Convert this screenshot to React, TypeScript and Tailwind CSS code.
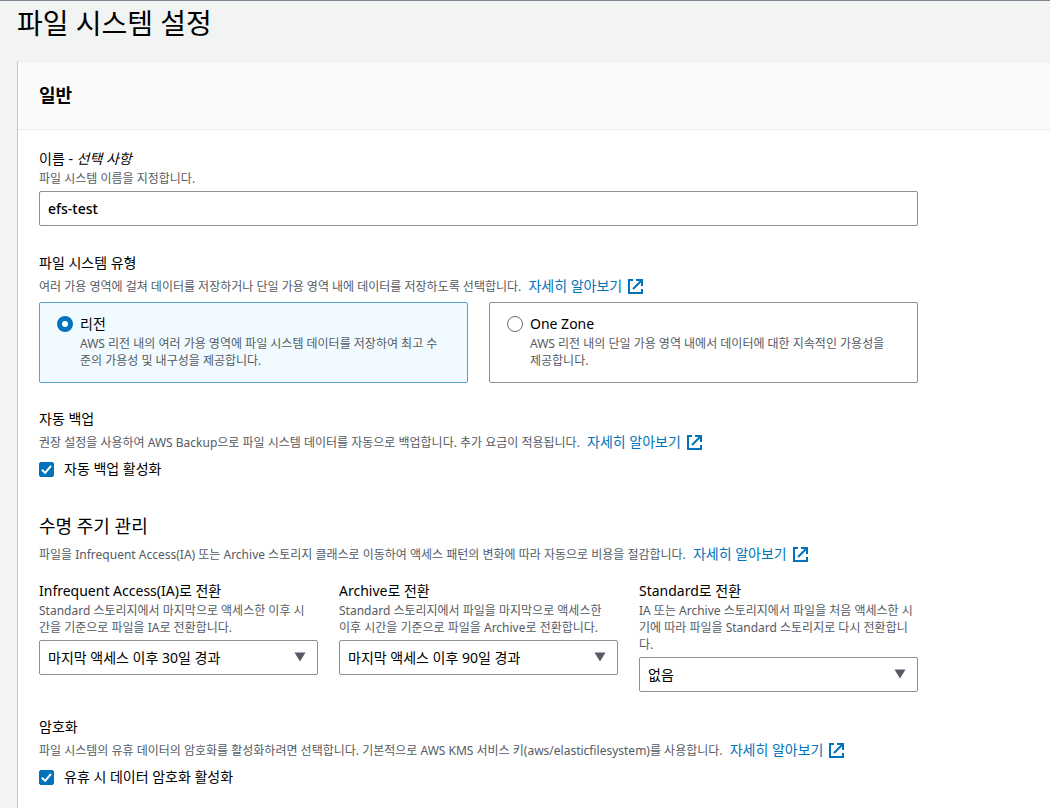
import { useId, useState } from "react";
import type { ReactNode } from "react";

const lifecyclePolicies = [
  {
    label: "Infrequent Access(IA)로 전환",
    description: "Standard 스토리지에서 마지막으로 액세스한 이후 시간을 기준으로 파일을 IA로 전환합니다.",
    options: ["마지막 액세스 이후 30일 경과", "없음"]
  },
  {
    label: "Archive로 전환",
    description: "Standard 스토리지에서 파일을 마지막으로 액세스한 이후 시간을 기준으로 파일을 Archive로 전환합니다.",
    options: ["마지막 액세스 이후 90일 경과", "없음"]
  },
  {
    label: "Standard로 전환",
    description: "IA 또는 Archive 스토리지에서 파일을 처음 액세스한 시기에 따라 파일을 Standard 스토리지로 다시 전환합니다.",
    options: ["없음", "처음 액세스 시"]
  }
];

const fileSystemTypes = [
  {
    value: "regional",
    label: "리전",
    description: "AWS 리전 내의 여러 가용 영역에 파일 시스템 데이터를 저장하여 최고 수준의 가용성 및 내구성을 제공합니다."
  },
  {
    value: "one-zone",
    label: "One Zone",
    description: "AWS 리전 내의 단일 가용 영역 내에서 데이터에 대한 지속적인 가용성을 제공합니다."
  }
];

function LearnMore() {
  return (
    <a href="#" className="ml-1 text-sm leading-4 text-[#0073bb] hover:underline">
      자세히 알아보기
      <svg
        viewBox="0 0 15 15"
        className="ml-1.5 inline-block size-[15px] align-[-3px]"
        fill="none"
        stroke="currentColor"
        strokeWidth="2"
        aria-hidden="true"
      >
        <path d="M5 1H1v13h13v-4" />
        <path d="M8 1h6v6M13.5 1.5L5 10" />
      </svg>
    </a>
  );
}

function Description({ children }: { children: ReactNode }) {
  return (
    <p className="pt-0.5 text-xs leading-[22px] text-[#545b64]">
      {children} <LearnMore />
    </p>
  );
}

function Checkbox({ label }: { label: string }) {
  const [checked, setChecked] = useState(true);

  return (
    <label className="mt-1 flex items-center gap-[10px] leading-[22px]">
      <span className="relative size-[15px]">
        <input
          type="checkbox"
          checked={checked}
          onChange={(e) => setChecked(e.target.checked)}
          className="block size-[15px] appearance-none rounded-xs border border-[#687078] checked:border-[#0073bb] checked:bg-[#0073bb]"
        />
        {checked && (
          <svg
            viewBox="0 0 15 15"
            className="pointer-events-none absolute inset-0 size-[15px]"
            fill="none"
            stroke="white"
            strokeWidth="2"
            aria-hidden="true"
          >
            <path d="M2.8 7.8l3.4 3L12 3.8" />
          </svg>
        )}
      </span>
      {label}
    </label>
  );
}

function PolicySelect({ label, description, options }: (typeof lifecyclePolicies)[number]) {
  const id = useId();

  return (
    <div>
      <label htmlFor={id} className="block leading-[22px]">
        {label}
      </label>
      <p className="pr-1 text-xs leading-[17px] text-[#545b64]">{description}</p>
      <div className="relative mt-1">
        <select
          id={id}
          className="block h-[35px] w-full appearance-none rounded-xs border border-[#879196] bg-white px-2 pr-8"
        >
          {options.map((option) => (
            <option key={option}>{option}</option>
          ))}
        </select>
        <svg
          viewBox="0 0 12 10"
          className="pointer-events-none absolute top-3 right-3 h-[10px] w-3 text-[#545b64]"
          fill="currentColor"
          aria-hidden="true"
        >
          <path d="M0.5 0.5h11L6 9.5z" />
        </svg>
      </div>
    </div>
  );
}

export default function App() {
  const [name, setName] = useState("efs-test");
  const [type, setType] = useState("regional");

  return (
    <main className="flex min-h-screen flex-col border-t border-[#7d8490] bg-[#f2f3f3] pl-[17px] font-['Noto_Sans','Noto_Sans_CJK_KR',sans-serif] text-sm text-black">
      <h1 className="pt-0.5 pb-4.5 text-[28px] leading-10">파일 시스템 설정</h1>

      <section className="flex-1 border-t border-l border-t-[#eaeded] border-l-[#c4cbcb] bg-white">
        <header className="border-b border-[#eaeded] bg-[#fafafa] px-[21px] py-5">
          <h2 className="text-lg leading-[27px] font-bold">일반</h2>
        </header>

        <div className="max-w-[921px] px-[21px] pt-[18px] pb-4">
          {/* Name */}
          <label htmlFor="fs-name" className="block leading-[22px]">
            이름 - <em>선택 사항</em>
          </label>
          <p className="text-xs leading-[17px] text-[#545b64]">파일 시스템 이름을 지정합니다.</p>
          <input
            id="fs-name"
            type="text"
            value={name}
            onChange={(e) => setName(e.target.value)}
            className="mt-1 block h-[35px] w-full rounded-xs border border-[#879196] bg-white px-2 font-medium"
          />

          {/* File system type */}
          <fieldset className="mt-[26px]">
            <legend className="leading-[22px]">파일 시스템 유형</legend>
            <Description>
              여러 가용 영역에 걸쳐 데이터를 저장하거나 단일 가용 영역 내에 데이터를 저장하도록 선택합니다.
            </Description>
            <div className="mt-1 grid grid-cols-2 gap-[21px]">
              {fileSystemTypes.map((item) => (
                <label
                  key={item.value}
                  className="flex gap-[7px] rounded-xs border border-[#879196] px-[17px] pt-[10px] pb-[13px] has-checked:border-[#5a9fd4] has-checked:bg-[#f1faff]"
                >
                  <input
                    type="radio"
                    name="fs-type"
                    value={item.value}
                    checked={type === item.value}
                    onChange={() => setType(item.value)}
                    className="mt-[3px] size-4 shrink-0 appearance-none rounded-full border border-[#687078] bg-white checked:border-[5px] checked:border-[#0073bb]"
                  />
                  <span className="pr-1">
                    <span className="block leading-[22px]">{item.label}</span>
                    <span className="block text-xs leading-[17px] text-[#545b64]">{item.description}</span>
                  </span>
                </label>
              ))}
            </div>
          </fieldset>

          {/* Automatic backups */}
          <div className="mt-[25px]">
            <h3 className="leading-[22px]">자동 백업</h3>
            <Description>
              권장 설정을 사용하여 AWS Backup으로 파일 시스템 데이터를 자동으로 백업합니다. 추가 요금이 적용됩니다.
            </Description>
            <Checkbox label="자동 백업 활성화" />
          </div>

          {/* Lifecycle management */}
          <div className="mt-[34px]">
            <h3 className="mb-1 text-lg leading-6">수명 주기 관리</h3>
            <Description>
              파일을 Infrequent Access(IA) 또는 Archive 스토리지 클래스로 이동하여 액세스 패턴의 변화에 따라 자동으로 비용을 절감합니다.
            </Description>
            <div className="mt-[14px] grid grid-cols-3 gap-[21px]">
              {lifecyclePolicies.map((policy) => (
                <PolicySelect key={policy.label} {...policy} />
              ))}
            </div>
          </div>

          {/* Encryption */}
          <div className="mt-6">
            <h3 className="leading-[22px]">암호화</h3>
            <Description>
              파일 시스템의 유휴 데이터의 암호화를 활성화하려면 선택합니다. 기본적으로 AWS KMS 서비스 키(aws/elasticfilesystem)를 사용합니다.
            </Description>
            <Checkbox label="유휴 시 데이터 암호화 활성화" />
          </div>
        </div>
      </section>
    </main>
  );
}
